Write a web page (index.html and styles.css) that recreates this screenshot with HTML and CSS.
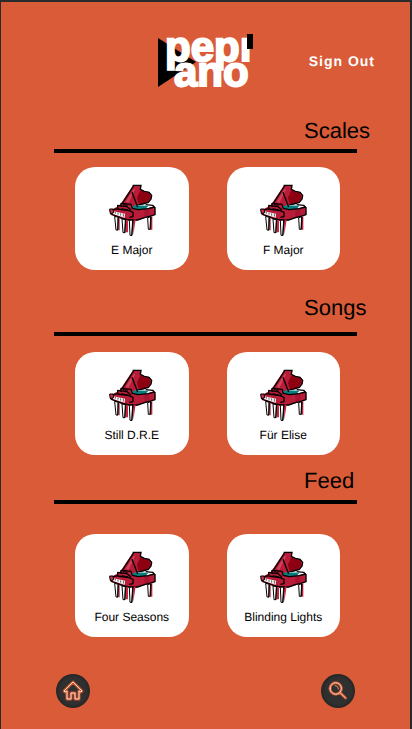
FILE: index.html
```html
<!DOCTYPE html>
<html lang="en">
<head>
<meta charset="utf-8">
<meta name="viewport" content="width=device-width, initial-scale=1">
<title>Pepiano</title>
<link rel="stylesheet" href="styles.css">
</head>
<body>
<svg class="sprite" aria-hidden="true">
  <symbol id="piano" viewBox="9 6 144 165">
    <!-- lid -->
    <path d="M48 67L84 13H108L107 25L118 31L133 33L140 42L139 54L130 64L113 70L98 73L72 78Z" fill="#b81c38"/>
    <path d="M106 28L118 34L132 37L136 44L134 54L127 63L112 68L100 66L96 50Z" fill="#8c0012"/>
    <path d="M62 62L86 24L91 23L70 66Z" fill="#d0435a"/>
    <path d="M47 64L80 14" stroke="#fff" stroke-width="3"/>
    <path d="M52 67L85 16V13H108L106 25L118 31L132 34L140 43L138 54L130 64L113 69L100 71" fill="none" stroke="#000" stroke-width="4"/>
    <!-- strings and case -->
    <path d="M70 80L92 73L130 74L122 84L94 90L76 88Z" fill="#087d7d"/>
    <path d="M81 34L98 78" stroke="#000" stroke-width="4"/>
    <path d="M16 88L42 74L48 66L78 69L82 82L100 87L126 82L150 76L151 101L122 111L92 119L60 118L18 102Z" fill="#b81c38"/>
    <path d="M118 86L133 83V104L118 108Z" fill="#a51430"/>
    <path d="M48 78V67L78 70L82 82L100 86L130 83L148 78L143 73L122 71M150 78V101L134 106L118 110L98 117H72L52 112L18 99L16 88L38 83V73L66 77L78 87M38 84L72 89L84 94V107L73 109" fill="none" stroke="#000" stroke-width="4" stroke-linejoin="bevel"/>
    <path d="M50 83L70 87M54 71L68 73" stroke="#000" stroke-width="3"/>
    <!-- keyboard -->
    <path d="M25 91L60 98L59 110L24 99Z" fill="#fff"/>
    <path d="M31 93V98M39 95V101M47 97V104M55 98V107" stroke="#000" stroke-width="2"/>
    <path d="M14 84L24 84L26 95L16 98Z" fill="#cf3751" stroke="#000" stroke-width="3"/>
    <!-- legs -->
    <path d="M40 110L44 112V148H41ZM62 118L69 116V154H62ZM84 117L92 115L85 162ZM138 107L142 105V146H138Z" fill="#c92340"/>
    <path d="M29 106L40 109L39 147H33ZM51 114L62 116L60 155H54ZM73 118L84 117L81 163H75ZM128 110L138 107L136 145H130Z" fill="#fff" stroke="#000" stroke-width="3"/>
    <path d="M39 109L38 148M61 116L59 156M83 117L80 164M137 108L135 146" stroke="#000" stroke-width="3"/>
  </symbol>
</svg>

<header class="top">
  <svg class="logo" viewBox="0 0 96 54" role="img" aria-label="Pepiano">
    <path d="M0 4L38 28L0 53Z" fill="#000"/>
    <text class="logo-text"><tspan x="7" y="27">pepı</tspan><tspan x="16" y="52">ano</tspan></text>
    <path d="M89 0H95V15H89Z" fill="#000"/>
  </svg>
  <a class="sign-out" href="#">Sign Out</a>
</header>

<main class="content">
  <section class="group scales">
    <h2>Scales</h2>
    <div class="cards">
      <a class="card" href="#"><svg class="piano"><use href="#piano"/></svg><span>E Major</span></a>
      <a class="card" href="#"><svg class="piano"><use href="#piano"/></svg><span>F Major</span></a>
    </div>
  </section>
  <section class="group songs">
    <h2>Songs</h2>
    <div class="cards">
      <a class="card" href="#"><svg class="piano"><use href="#piano"/></svg><span>Still D.R.E</span></a>
      <a class="card" href="#"><svg class="piano"><use href="#piano"/></svg><span>Für Elise</span></a>
    </div>
  </section>
  <section class="group feed">
    <h2>Feed</h2>
    <div class="cards">
      <a class="card" href="#"><svg class="piano"><use href="#piano"/></svg><span>Four Seasons</span></a>
      <a class="card" href="#"><svg class="piano"><use href="#piano"/></svg><span>Blinding Lights</span></a>
    </div>
  </section>
</main>

<nav class="bottom">
  <button class="round" type="button" aria-label="Home">
    <svg viewBox="0 0 34 34" fill="none" stroke-linejoin="round">
      <path class="glow" d="M17 8L26 17L25 18L23 17V25H19V19H15V25H11V17L9 18L8 17Z"/>
      <path class="core" d="M17 8L26 17L25 18L23 17V25H19V19H15V25H11V17L9 18L8 17Z"/>
    </svg>
  </button>
  <button class="round" type="button" aria-label="Search">
    <svg viewBox="0 0 34 34" fill="none" stroke-linecap="round">
      <path class="glow" d="M9 14.500a5.700 5.700 0 1 0 11.400 0a5.700 5.700 0 1 0 -11.400 0M19 18.500L24.500 24"/>
      <path class="core" d="M9 14.500a5.700 5.700 0 1 0 11.400 0a5.700 5.700 0 1 0 -11.400 0M19 18.500L24.500 24"/>
      <path class="shine" d="M14 11.500Q17.500 11.500 17.500 15"/>
    </svg>
  </button>
</nav>
</body>
</html>
```

FILE: styles.css
```css
* {
  box-sizing: border-box;
}

body {
  margin: 0;
  min-height: 100vh;
  border: solid #292b2b;
  border-width: 2px 2px 0 1px;
  background: #d95b37;
  color: #000;
  font-family: "Liberation Sans", Arial, sans-serif;
  text-rendering: geometricPrecision;
}

a {
  color: inherit;
  text-decoration: none;
}

.sprite {
  display: none;
}

.top {
  display: grid;
  grid-template-columns: 1fr 96px 1fr;
  align-items: center;
  padding: 32px 35px 0;
}

.logo {
  grid-column: 2;
  width: 96px;
  height: 54px;
  overflow: visible;
}

.logo-text {
  fill: #fff;
  stroke: #fff;
  stroke-width: 2px;
  font-size: 42px;
  font-weight: bold;
}

.sign-out {
  justify-self: end;
  color: #fff;
  font-size: 14px;
  font-weight: bold;
  letter-spacing: 1px;
  line-height: 16px;
}

.content {
  padding: 30px 53px 0;
}

.group {
  display: flex;
  flex-direction: column;
}

.group h2 {
  align-self: flex-end;
  width: 68px;
  margin: 0 -15px 0 0;
  font-size: 22px;
  font-weight: normal;
  line-height: 26px;
}

.cards {
  display: grid;
  grid-template-columns: 1fr 1fr;
  gap: 38px;
  margin-top: 5px;
  padding: 14px 17px 0 21px;
  border-top: 4px solid #000;
}

.songs {
  margin-top: 25px;
}

.songs .cards {
  margin-top: 11px;
  padding-top: 16px;
}

.feed {
  margin-top: 13px;
}

.feed .cards {
  margin-top: 6px;
  padding-top: 30px;
}

.card {
  display: flex;
  flex-direction: column;
  align-items: center;
  padding: 16px 0 13px;
  border-radius: 20px;
  background: #fff;
  font-size: 12px;
  line-height: 14px;
  white-space: nowrap;
}

.piano {
  width: 48px;
  height: 55px;
  margin-bottom: 5px;
}

.bottom {
  display: flex;
  justify-content: space-between;
  padding: 37px 55px 20px;
}

.round {
  width: 34px;
  height: 34px;
  padding: 0;
  border: 0;
  border-radius: 50%;
  background: radial-gradient(circle, #303030 0 55%, #242625 70%);
}

.round svg {
  display: block;
  width: 34px;
  height: 34px;
}

.glow {
  stroke: #c4552f;
  stroke-width: 3px;
}

.core {
  stroke: #ffd5c2;
  stroke-width: 1px;
}

.shine {
  stroke: #f08a68;
  stroke-width: 1px;
}
```
